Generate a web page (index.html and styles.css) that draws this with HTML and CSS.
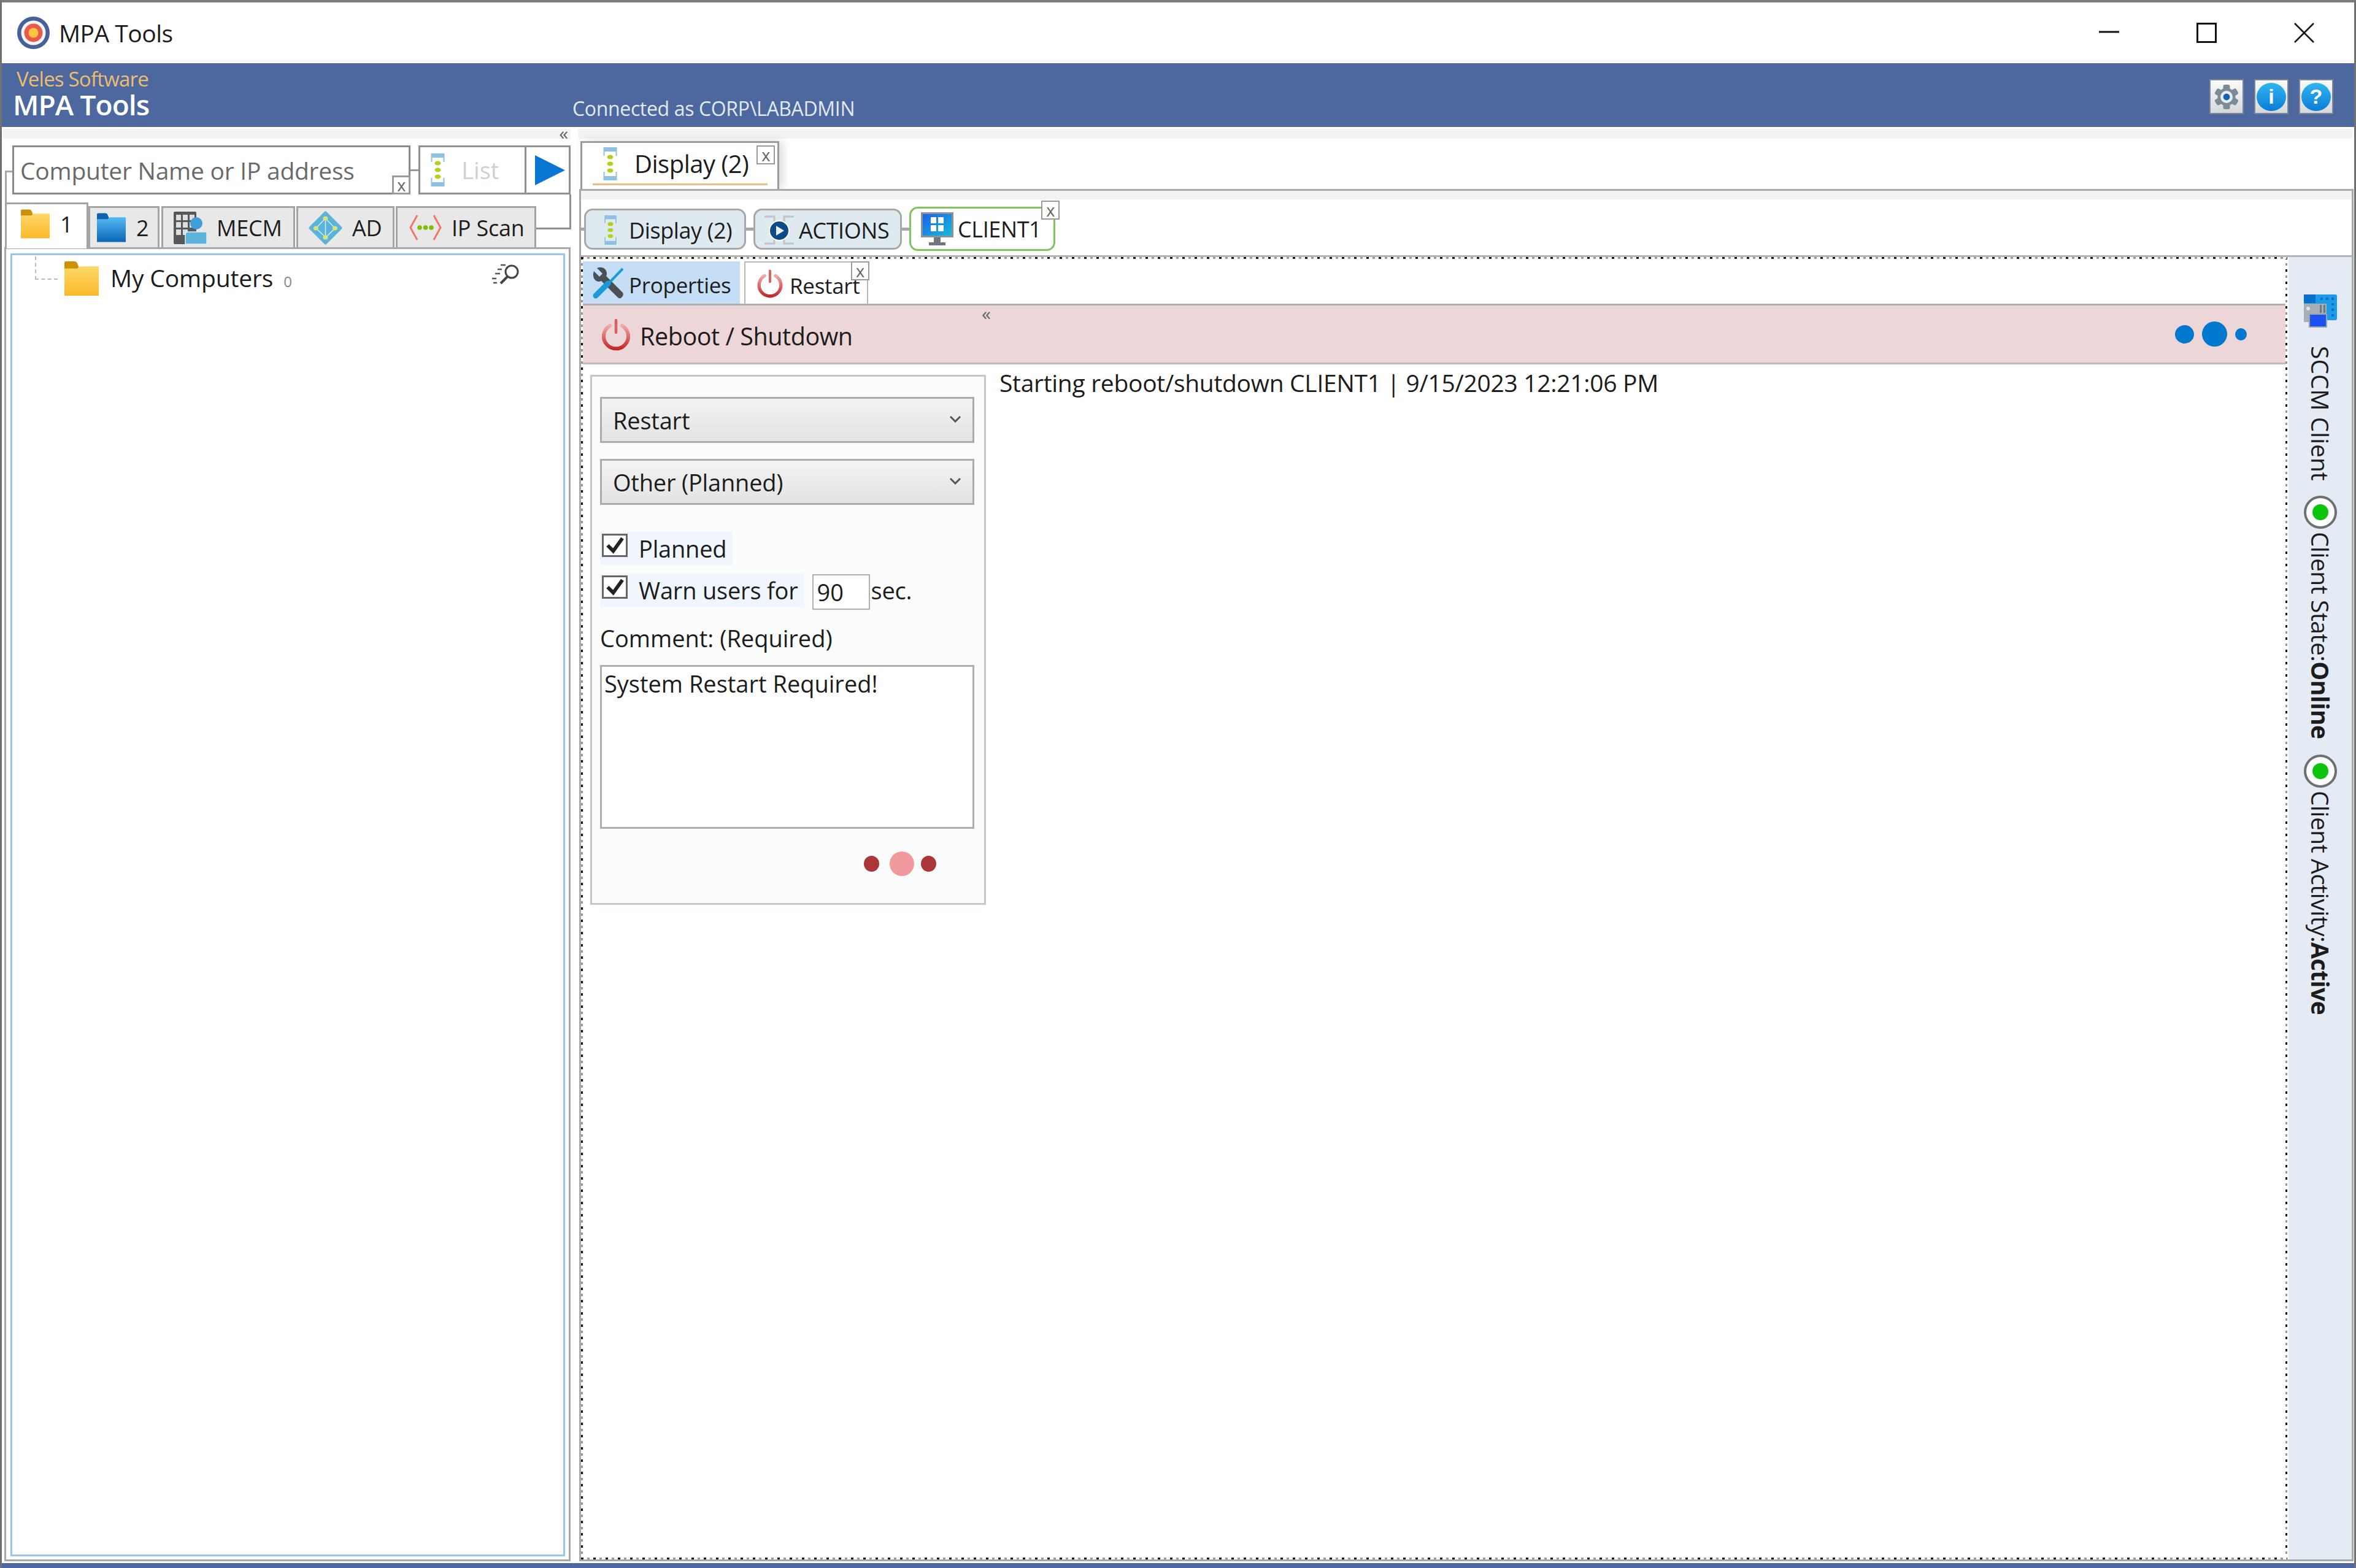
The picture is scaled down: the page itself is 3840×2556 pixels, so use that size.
FILE: index.html
```html
<!DOCTYPE html>
<html lang="en">
<head>
  <meta charset="UTF-8" />
  <title>MPA Tools</title>
  <link rel="stylesheet" href="styles.css">
</head>
<body>

  <!-- shared icons -->
  <svg class="icon-defs" width="0" height="0">
    <defs>
      <linearGradient id="gradYellow" x1="0" y1="0" x2="0" y2="1"><stop offset="0" stop-color="#fdd868"/><stop offset="1" stop-color="#fbb82a"/></linearGradient>
      <linearGradient id="gradBlue" x1="0" y1="0" x2="0" y2="1"><stop offset="0" stop-color="#55b8f2"/><stop offset="1" stop-color="#0a66b6"/></linearGradient>
      <linearGradient id="gradPower" x1="0" y1="0" x2="0" y2="1"><stop offset="0" stop-color="#f0a8a8"/><stop offset="1" stop-color="#c62828"/></linearGradient>
      <linearGradient id="gradScreen" x1="0" y1="0" x2="1" y2="1"><stop offset="0" stop-color="#1a60ea"/><stop offset="1" stop-color="#18bcdc"/></linearGradient>
    </defs>
    <symbol id="i-folder-yellow" viewBox="0 0 48 48">
      <path d="M0 2q0-2 2-2h12q3 0 4 3l2 5v6H0z" fill="#d08f08"/>
      <path d="M0 10h18l3-3h27v41H0z" fill="url(#gradYellow)"/>
    </symbol>
    <symbol id="i-folder-blue" viewBox="0 0 48 48">
      <path d="M0 2q0-2 2-2h12q3 0 4 3l2 5v6H0z" fill="#0f62b0"/>
      <path d="M0 10h18l3-3h27v41H0z" fill="url(#gradBlue)"/>
    </symbol>
    <symbol id="i-display" viewBox="0 0 22 54">
      <path d="M0 0h22v14h-2V7H2v7H0z" fill="#8fc1e2"/>
      <path d="M0 54h22V40h-2v7H2v-7H0z" fill="#8fc1e2"/>
      <ellipse cx="11" cy="16" rx="5" ry="3.500" fill="#b4cf1e"/>
      <ellipse cx="11" cy="27" rx="5" ry="3.500" fill="#b4cf1e"/>
      <ellipse cx="11" cy="38" rx="5" ry="3.500" fill="#b4cf1e"/>
    </symbol>
    <symbol id="i-power" viewBox="0 0 48 54">
      <path d="M14 13a20 20 0 1 0 20 0" fill="none" stroke="url(#gradPower)" stroke-width="6" stroke-linecap="round"/>
      <path d="M24 4v20" fill="none" stroke="#dc6060" stroke-width="4.500" stroke-linecap="round"/>
    </symbol>
    <symbol id="i-radio" viewBox="0 0 54 54">
      <circle cx="27" cy="27" r="25" fill="#fff" stroke="#6f6f6f" stroke-width="4"/>
      <circle cx="27" cy="27" r="13" fill="#0cc40c"/>
    </symbol>
    <symbol id="i-chevron" viewBox="0 0 20 12">
      <path d="M2 2l8 8 8-8" fill="none" stroke="#555" stroke-width="3"/>
    </symbol>
    <symbol id="i-check" viewBox="0 0 40 36">
      <path d="M6 18l11 11L35 4" fill="none" stroke="#222" stroke-width="7"/>
    </symbol>
  </svg>

  <div class="window">

    <header class="titlebar">
      <svg class="logo" viewBox="0 0 53 53">
        <circle cx="26.500" cy="26.500" r="26.500" fill="#47609a"/>
        <circle cx="26.500" cy="26.500" r="20" fill="#f4f5f8"/>
        <circle cx="26.500" cy="26.500" r="15" fill="#ea5a4c"/>
        <circle cx="26.500" cy="26.500" r="8" fill="#fbc53c"/>
      </svg>
      <span class="app-title">MPA Tools</span>
      <div class="win-controls">
        <svg viewBox="0 0 33 33"><path d="M0 15h33" stroke="#111" stroke-width="3"/></svg>
        <svg viewBox="0 0 33 33"><rect x="1.500" y="1.500" width="30" height="30" fill="none" stroke="#111" stroke-width="3"/></svg>
        <svg viewBox="0 0 33 33"><path d="M1 1l31 31M32 1L1 32" stroke="#111" stroke-width="2.500"/></svg>
      </div>
    </header>

    <div class="banner">
      <div class="brand">
        <div class="brand-sub">Veles Software</div>
        <div class="brand-name">MPA Tools</div>
      </div>
      <div class="connected">Connected as CORP\LABADMIN</div>
      <div class="tool-buttons">
        <button class="tool-btn" aria-label="Settings">
          <svg class="gear" viewBox="0 0 44 44">
            <g fill="#7c8b98">
              <rect x="16" y="0" width="12" height="44" rx="3"/>
              <rect x="16" y="0" width="12" height="44" rx="3" transform="rotate(60 22 22)"/>
              <rect x="16" y="0" width="12" height="44" rx="3" transform="rotate(120 22 22)"/>
              <circle cx="22" cy="22" r="16"/>
            </g>
            <circle cx="22" cy="22" r="11" fill="#e9edf0"/>
            <circle cx="22" cy="22" r="6" fill="#1464b4"/>
          </svg>
        </button>
        <button class="tool-btn"><span class="round-icon">i</span></button>
        <button class="tool-btn"><span class="round-icon">?</span></button>
      </div>
    </div>

    <div class="content">

      <aside class="left-pane">
        <div class="pane-band"><span class="collapse">«</span></div>

        <div class="search-row">
          <div class="search-box">
            <input class="search-input" placeholder="Computer Name or IP address">
            <span class="close-box close-box-search">x</span>
          </div>
          <div class="link-line"></div>
          <div class="list-btn">
            <svg class="icon-display"><use href="#i-display"/></svg>
            <span>List</span>
          </div>
          <div class="go-btn">
            <svg viewBox="0 0 49 49" class="go-arrow"><path d="M0 0l49 24.500L0 49z" fill="#0a78d2"/></svg>
          </div>
        </div>

        <div class="tabs-row">
          <div class="tab tab-active tab-1"><svg class="tab-folder"><use href="#i-folder-yellow"/></svg><span>1</span></div>
          <div class="tab tab-2"><svg class="tab-folder"><use href="#i-folder-blue"/></svg><span>2</span></div>
          <div class="tab tab-mecm">
            <svg class="tab-icon" viewBox="0 0 54 53">
              <rect x="0" y="0" width="37" height="53" rx="2" fill="#56595c"/>
              <g fill="#dcdee0">
                <rect x="4" y="5" width="8" height="9"/><rect x="15" y="5" width="8" height="9"/><rect x="26" y="5" width="8" height="9"/>
                <rect x="4" y="17" width="8" height="9"/><rect x="15" y="17" width="8" height="9"/><rect x="26" y="17" width="8" height="9"/>
                <rect x="4" y="29" width="8" height="9"/><rect x="15" y="29" width="8" height="9"/>
              </g>
              <circle cx="37" cy="19" r="10" fill="#3f9fd6"/>
              <path d="M19 53V38q0-5 5-5h30v20z" fill="#5cb4dc" stroke="#e8e8e8" stroke-width="1.500"/>
            </svg>
            <span>MECM</span>
          </div>
          <div class="tab tab-ad">
            <svg class="tab-icon tab-icon-ad" viewBox="0 0 55 55">
              <path d="M27.500 3l24.500 24.500-24.500 24.500L3 27.500z" fill="#5bb3dc" stroke="#5bb3dc" stroke-width="5" stroke-linejoin="round"/>
              <path d="M27.500 12L12 28l16 15 15-15zM27.500 12v31" fill="none" stroke="#d4edf8" stroke-width="1.500"/>
              <ellipse cx="27.500" cy="12" rx="4" ry="3.500" fill="#dbe46e"/><ellipse cx="12" cy="28" rx="4" ry="3.500" fill="#dbe46e"/><ellipse cx="43" cy="28" rx="4" ry="3.500" fill="#dbe46e"/><ellipse cx="27.500" cy="43" rx="4" ry="3.500" fill="#dbe46e"/>
            </svg>
            <span>AD</span>
          </div>
          <div class="tab tab-scan">
            <svg class="tab-icon-scan" viewBox="0 0 55 42">
              <path d="M14 1L3 21l11 20M41 1l11 20-11 20" fill="none" stroke="#f2756c" stroke-width="3"/>
              <circle cx="18" cy="21" r="3.800" fill="#84bd00"/><circle cx="27.500" cy="21" r="3.800" fill="#84bd00"/><circle cx="37" cy="21" r="3.800" fill="#84bd00"/>
            </svg>
            <span>IP Scan</span>
          </div>
        </div>

        <div class="tree-frame">
          <div class="tree">
            <div class="tree-row">
              <svg class="tree-folder"><use href="#i-folder-yellow"/></svg>
              <span class="tree-label">My Computers</span>
              <span class="tree-count">0</span>
              <svg class="tree-search" viewBox="0 0 49 34">
                <circle cx="32" cy="13" r="10" fill="none" stroke="#444" stroke-width="3"/>
                <path d="M25 21L14 32" stroke="#444" stroke-width="4"/>
                <path d="M14 2h8M9 9h7M5 16h8M0 24h7M2 31h6" stroke="#555" stroke-width="2.500"/>
              </svg>
            </div>
          </div>
        </div>
      </aside>

      <main class="main-pane">
        <div class="pane-band"></div>

        <div class="top-tabs">
          <div class="top-tab">
            <svg class="icon-display"><use href="#i-display"/></svg>
            <span>Display (2)</span>
            <span class="close-box close-box-top">x</span>
          </div>
        </div>

        <div class="panel">
          <div class="panel-band"></div>

          <div class="pills">
            <div class="pill-link"></div>
            <div class="pill pill-display">
              <svg class="icon-display-sm"><use href="#i-display"/></svg>
              <span>Display (2)</span>
            </div>
            <div class="pill-link"></div>
            <div class="pill pill-actions">
              <svg class="icon-actions" viewBox="0 0 48 48">
                <path d="M0 2h16v12M48 2H32v12M0 46h16V34M48 46H32V34" fill="none" stroke="#c2c5c8" stroke-width="3"/>
                <circle cx="24" cy="25" r="16" fill="#0d4a86" stroke="#fff" stroke-width="2"/>
                <path d="M19 17l13 8-13 8z" fill="#e8eff5"/>
              </svg>
              <span>ACTIONS</span>
            </div>
            <div class="pill-link"></div>
            <div class="pill pill-client">
              <svg class="icon-monitor" viewBox="0 0 53 54">
                <rect x="1.500" y="1.500" width="50" height="38" fill="url(#gradScreen)" stroke="#8a9299" stroke-width="3"/>
                <g fill="#fff"><rect x="16" y="8" width="9" height="10"/><rect x="28" y="8" width="9" height="10"/><rect x="16" y="21" width="9" height="10"/><rect x="28" y="21" width="9" height="10"/></g>
                <rect x="21" y="41" width="11" height="8" fill="#6f777d"/>
                <rect x="13" y="49" width="27" height="5" fill="#6f777d"/>
              </svg>
              <span>CLIENT1</span>
              <span class="close-box close-box-client">x</span>
            </div>
          </div>

          <div class="workspace">
            <div class="doc">
              <div class="doc-tabs">
                <div class="doc-tab doc-tab-props">
                  <svg class="icon-tools" viewBox="0 0 53 53">
                    <path d="M3 8l9 9 5-5-9-9c7-3 15 0 16 8 0 2 0 3-1 5l27 27q2 3-1 7t-7 1L15 24c-2 1-4 1-5 1C3 24 0 15 3 8z" fill="#4b5056"/>
                    <path d="M50 4L24 31" stroke="#1c9ad8" stroke-width="4"/>
                    <path d="M26 28L6 48" stroke="#1c9ad8" stroke-width="9" stroke-linecap="round"/>
                  </svg>
                  <span>Properties</span>
                </div>
                <div class="doc-tab doc-tab-restart">
                  <svg class="icon-power-sm"><use href="#i-power"/></svg>
                  <span>Restart</span>
                  <span class="close-box close-box-restart">x</span>
                </div>
              </div>

              <div class="reboot-band">
                <svg class="icon-power"><use href="#i-power"/></svg>
                <span class="reboot-title">Reboot / Shutdown</span>
                <span class="collapse collapse-band">«</span>
                <div class="dots dots-blue"><i class="dot dot-m"></i><i class="dot dot-l"></i><i class="dot dot-s"></i></div>
              </div>

              <div class="doc-body">
                <form class="reboot-form">
                  <div class="select"><span>Restart</span><svg class="chevron"><use href="#i-chevron"/></svg></div>
                  <div class="select"><span>Other (Planned)</span><svg class="chevron"><use href="#i-chevron"/></svg></div>

                  <div class="check-row check-first">
                    <label class="check"><span class="check-box"><svg class="check-mark"><use href="#i-check"/></svg></span>Planned</label>
                  </div>
                  <div class="check-row">
                    <label class="check"><span class="check-box"><svg class="check-mark"><use href="#i-check"/></svg></span>Warn users for</label>
                    <input class="seconds" value="90">
                    <span class="seconds-unit">sec.</span>
                  </div>

                  <div class="comment-label">Comment: (Required)</div>
                  <textarea class="comment">System Restart Required!</textarea>

                  <div class="dots dots-red"><i class="dot dot-edge"></i><i class="dot dot-mid"></i><i class="dot dot-edge"></i></div>
                </form>

                <div class="log-line">Starting reboot/shutdown CLIENT1 | 9/15/2023 12:21:06 PM</div>
              </div>
            </div>

            <div class="side">
              <svg class="icon-sccm" viewBox="0 0 54 54">
                <rect x="0" y="0" width="54" height="42" rx="3" fill="#1b9be8"/>
                <rect x="0" y="0" width="19" height="14" fill="#0a6fcb"/>
                <g fill="#0a6fcb">
                  <rect x="3" y="5" width="4" height="4"/><rect x="11" y="5" width="4" height="4"/>
                  <rect x="27" y="5" width="4" height="4"/><rect x="36" y="5" width="4" height="4"/><rect x="45" y="5" width="4" height="4"/>
                  <rect x="45" y="14" width="4" height="4"/><rect x="45" y="23" width="4" height="4"/><rect x="45" y="32" width="4" height="4"/>
                </g>
                <rect x="0" y="15" width="37" height="30" fill="#a8afb4"/>
                <circle cx="7" cy="23" r="3" fill="#e4e7e9"/>
                <rect x="26" y="17" width="3" height="13" fill="#6f787e"/><rect x="32" y="17" width="3" height="13" fill="#6f787e"/>
                <rect x="9" y="32" width="28" height="21" fill="#1b52f2" stroke="#9aa3a9" stroke-width="2"/>
              </svg>
              <span class="side-label side-sccm">SCCM Client</span>
              <svg class="side-radio radio-state"><use href="#i-radio"/></svg>
              <span class="side-label side-near">Client State:<b>Online</b></span>
              <svg class="side-radio radio-activity"><use href="#i-radio"/></svg>
              <span class="side-label side-near">Client Activity:<b>Active</b></span>
            </div>
          </div>
        </div>
      </main>
    </div>

    <div class="statusbar"></div>
  </div>

</body>
</html>
```

FILE: styles.css
```css
* {
  box-sizing: border-box;
}

html, body {
  margin: 0;
  padding: 0;
  background: #fff;
}

body {
  width: 3840px;
  height: 2556px;
  overflow: hidden;
  font-family: "Open Sans", "Noto Sans", sans-serif;
  font-size: 38px;
  color: #1c1c1c;
}

.icon-defs {
  position: absolute;
}

.window {
  display: flex;
  flex-direction: column;
  height: 2556px;
  border-top: 4px solid #7c7c7c;
  border-left: 3px solid #707070;
  border-right: 3px solid #707070;
}

/* title bar */
.titlebar {
  display: flex;
  align-items: center;
  height: 99px;
  padding-left: 25px;
  flex: none;
}

.logo {
  width: 53px;
  height: 53px;
}

.app-title {
  margin-left: 15px;
  font-size: 39px;
  letter-spacing: -0.5px;
}

.win-controls {
  display: flex;
  gap: 126px;
  margin-left: auto;
  margin-right: 65px;
}

.win-controls svg {
  width: 33px;
  height: 33px;
}

/* blue banner */
.banner {
  display: flex;
  height: 104px;
  flex: none;
  background: #4d689f;
  padding-left: 18px;
}

.brand {
  width: 912px;
  padding-top: 7px;
}

.brand-sub {
  padding-left: 6px;
  font-size: 33px;
  line-height: 37px;
  letter-spacing: -0.8px;
  color: #eebd6f;
}

.brand-name {
  font-size: 46px;
  line-height: 46px;
  font-weight: 600;
  letter-spacing: -0.9px;
  color: #fff;
}

.connected {
  align-self: flex-end;
  padding-bottom: 9px;
  font-size: 32px;
  letter-spacing: -0.35px;
  color: #e3e9f3;
}

.tool-buttons {
  display: flex;
  gap: 17px;
  margin-left: auto;
  margin-right: 34px;
  margin-top: 26px;
}

.tool-btn {
  display: flex;
  align-items: center;
  justify-content: center;
  width: 56px;
  height: 57px;
  padding: 0;
  background: linear-gradient(#fafafa, #d6d9dc);
  border: 2px solid #7f8794;
}

.gear {
  width: 44px;
  height: 40px;
}

.round-icon {
  display: flex;
  align-items: center;
  justify-content: center;
  width: 48px;
  height: 46px;
  border-radius: 50%;
  background: linear-gradient(#2fb6f0, #0c7cd6);
  color: #fff;
  font-size: 34px;
  font-weight: 700;
}

/* main area */
.content {
  display: flex;
  flex: 1;
  min-height: 0;
}

.pane-band {
  display: flex;
  justify-content: flex-end;
  height: 16px;
  margin-top: 3px;
  margin-left: 2px;
  flex: none;
  background: #f3f3f3;
}

.collapse {
  font-size: 30px;
  line-height: 13px;
  color: #666;
  padding-right: 4px;
}

/* left pane */
.left-pane {
  position: relative;
  display: flex;
  flex-direction: column;
  width: 927px;
  flex: none;
}

.search-row {
  position: relative;
  display: flex;
  align-items: center;
  height: 80px;
  margin-top: 11px;
  padding-left: 17px;
}

.search-row::before {
  content: "";
  position: absolute;
  left: 5px;
  top: 41px;
  width: 12px;
  height: 60px;
  border-left: 3px solid #a8a8a8;
  border-top: 3px solid #a8a8a8;
}

.search-row::after {
  content: "";
  position: absolute;
  left: 871px;
  top: 80px;
  width: 54px;
  height: 54px;
  border-right: 3px solid #8f8f8f;
  border-bottom: 3px solid #8f8f8f;
}

.search-box {
  position: relative;
  width: 650px;
  height: 80px;
}

.search-input {
  width: 100%;
  height: 100%;
  padding: 0 0 0 10px;
  border: 3px solid #8a8a8a;
  outline: none;
  font-family: inherit;
  font-size: 39px;
  letter-spacing: -0.25px;
  color: #666;
}

.search-input::placeholder {
  color: #6a6a6a;
  opacity: 1;
}

.close-box {
  position: absolute;
  display: flex;
  align-items: center;
  justify-content: center;
  width: 30px;
  height: 31px;
  background: #fff;
  border: 2px solid #9a9a9a;
  font-size: 27px;
  line-height: 1;
  color: #666;
}

.close-box-search {
  right: 0;
  bottom: 0;
  border-width: 3px;
}

.link-line {
  width: 13px;
  height: 3px;
  background: #999;
}

.list-btn {
  display: flex;
  align-items: center;
  width: 173px;
  height: 80px;
  padding-left: 17px;
  border: 3px solid #8f8f95;
  border-right: none;
  font-size: 38px;
  color: #ccd0d4;
}

.icon-display {
  width: 23px;
  height: 54px;
}

.list-btn span {
  margin-left: 27px;
}

.go-btn {
  display: flex;
  align-items: center;
  width: 75px;
  height: 80px;
  padding-left: 14px;
  border: 3px solid #8f8f95;
}

.go-arrow {
  width: 49px;
  height: 49px;
}

.tabs-row {
  position: relative;
  z-index: 1;
  display: flex;
  align-items: flex-end;
  height: 75px;
  margin-top: 13px;
  padding-left: 5px;
}

.tab {
  display: flex;
  align-items: center;
  height: 67px;
  margin-bottom: 2px;
  background: #e8e8e8;
  border: 3px solid #a4a4a4;
  border-bottom: none;
  font-size: 36px;
  letter-spacing: -0.2px;
}

.tab-active {
  height: 75px;
  margin-bottom: 0;
  background: #fff;
  padding-bottom: 8px;
}

.tab-1 {
  width: 136px;
  padding-left: 23px;
}

.tab-2 {
  width: 116px;
  padding-left: 11px;
}

.tab-mecm {
  width: 218px;
  margin-left: 3px;
  padding-left: 17px;
}

.tab-ad {
  width: 160px;
  margin-left: 2px;
  padding-left: 17px;
}

.tab-scan {
  width: 229px;
  margin-left: 2px;
  padding-left: 18px;
}

.tab-folder {
  width: 47px;
  height: 48px;
}

.tab span {
  margin-left: 17px;
}

.tab-mecm span,
.tab-ad span {
  margin-left: 16px;
}

.tab-scan span {
  margin-left: 15px;
}

.tab-icon {
  width: 54px;
  height: 53px;
}

.tab-icon-ad {
  width: 55px;
  height: 55px;
}

.tab-icon-scan {
  width: 55px;
  height: 42px;
}

.tree-frame {
  flex: 1;
  width: 923px;
  margin: -2px 0 3px 4px;
  padding: 7px 6px 5px 7px;
  border: 3px solid #a8a8a8;
  background: #fff;
}

.tree {
  height: 100%;
  border: 3px solid #9cc4ee;
}

.tree-row {
  position: relative;
  display: flex;
  align-items: center;
  height: 58px;
  margin-top: 9px;
  padding-left: 84px;
}

.tree-row::before {
  content: "";
  position: absolute;
  left: 37px;
  top: -7px;
  width: 35px;
  height: 36px;
  border-left: 2px dashed #b4bcc6;
  border-bottom: 2px dashed #b4bcc6;
}

.tree-folder {
  width: 58px;
  height: 56px;
}

.tree-label {
  margin-left: 18px;
  margin-top: -4px;
  font-size: 39px;
  letter-spacing: -0.15px;
}

.tree-count {
  margin-left: 17px;
  margin-top: 8px;
  font-size: 24px;
  color: #888;
}

.tree-search {
  width: 49px;
  height: 34px;
  margin-left: auto;
  margin-right: 67px;
  margin-top: -14px;
}

/* right pane */
.main-pane {
  display: flex;
  flex-direction: column;
  flex: 1;
  min-width: 0;
  margin-left: 12px;
  margin-right: 1px;
}

.main-pane .pane-band {
  margin-left: 0;
  margin-right: 2px;
}

.top-tabs {
  display: flex;
  height: 78px;
  margin-top: 4px;
  padding-left: 4px;
  flex: none;
}

.top-tab {
  position: relative;
  display: flex;
  align-items: center;
  width: 324px;
  padding: 0 0 8px 34px;
  background: #fff;
  border: 3px solid #9c9c9c;
  border-bottom: none;
  box-shadow: 6px 0 14px rgba(0, 0, 0, 0.14);
  font-size: 40px;
  letter-spacing: -0.5px;
}

.top-tab::after {
  content: "";
  position: absolute;
  left: 17px;
  right: 16px;
  bottom: 6px;
  height: 3px;
  background: #e9bd85;
}

.top-tab span:not(.close-box) {
  margin-left: 28px;
}

.close-box-top {
  top: 4px;
  right: 4px;
}

.panel {
  position: relative;
  display: flex;
  flex-direction: column;
  flex: 1;
  min-height: 0;
  margin-left: 2px;
  margin-bottom: 3px;
  background: #fff;
  border: 3px solid #a8a8a8;
}

.panel-band {
  height: 14px;
  background: #f2f2f2;
  flex: none;
}

.pills {
  display: flex;
  align-items: center;
  height: 72px;
  margin-top: 12px;
  flex: none;
}

.pill-link {
  width: 12px;
  height: 5px;
  background: #a8a8a8;
}

.pill-link:first-child {
  width: 5px;
}

.pill {
  position: relative;
  display: flex;
  align-items: center;
  height: 67px;
  padding-top: 4px;
  background: #dfe9f0;
  border: 3px solid #a8a8a8;
  border-radius: 14px;
  font-size: 36px;
  letter-spacing: -0.4px;
}

.pill-display {
  width: 264px;
  padding-left: 29px;
}

.pill-actions {
  width: 242px;
  padding-left: 15px;
}

.pill-client {
  width: 238px;
  height: 72px;
  padding-top: 0;
  padding-left: 16px;
  background: #fff;
  border-color: #80c45c;
}

.icon-display-sm {
  width: 22px;
  height: 48px;
}

.pill-display span {
  margin-left: 19px;
}

.icon-actions {
  width: 48px;
  height: 48px;
}

.pill-actions span {
  margin-left: 8px;
}

.icon-monitor {
  width: 53px;
  height: 54px;
}

.pill-client span:not(.close-box) {
  margin-left: 7px;
}

.close-box-client {
  top: -13px;
  right: -10px;
}

.workspace {
  display: flex;
  flex: 1;
  min-height: 0;
  margin-top: 7px;
  border-top: 3px solid #b4b4b4;
}

/* the dotted frame alternates black and grey dots, which a plain dotted border can't do */
.doc {
  display: flex;
  flex-direction: column;
  flex: 1;
  min-width: 0;
  margin-right: 2px;
  padding: 3px;
  background:
    repeating-linear-gradient(90deg, #111 0 4px, #fff 4px 10px, #999 10px 14px, #fff 14px 20px) left top / 100% 3px no-repeat,
    repeating-linear-gradient(90deg, #111 0 4px, #fff 4px 10px, #999 10px 14px, #fff 14px 20px) left bottom / 100% 3px no-repeat,
    repeating-linear-gradient(180deg, #111 0 4px, #fff 4px 10px, #999 10px 14px, #fff 14px 20px) left top / 3px 100% no-repeat,
    repeating-linear-gradient(180deg, #111 0 4px, #fff 4px 10px, #999 10px 14px, #fff 14px 20px) right top / 3px 100% no-repeat;
}

.doc-tabs {
  display: flex;
  height: 76px;
  padding-top: 4px;
  flex: none;
  border-bottom: 3px solid #b0b0b0;
}

.doc-tab {
  position: relative;
  display: flex;
  align-items: center;
  font-size: 35px;
  letter-spacing: -0.3px;
}

.doc-tab-props {
  width: 256px;
  padding-left: 15px;
  background: #c5def5;
}

.doc-tab-restart {
  width: 202px;
  margin-left: 7px;
  padding-left: 18px;
  background: #fff;
  border: 2px solid #b8b8b8;
  border-bottom: none;
}

.icon-tools {
  width: 53px;
  height: 53px;
}

.doc-tab-props span {
  margin-left: 7px;
  margin-top: 8px;
}

.icon-power-sm {
  width: 44px;
  height: 48px;
}

.doc-tab-restart span:not(.close-box) {
  margin-left: 10px;
  margin-top: 8px;
}

.close-box-restart {
  top: -2px;
  right: -4px;
}

.reboot-band {
  position: relative;
  display: flex;
  align-items: center;
  height: 96px;
  padding-left: 30px;
  flex: none;
  background: #ecd6d8;
  border-bottom: 3px solid #c4b8b9;
}

.icon-power {
  width: 48px;
  height: 54px;
}

.reboot-title {
  margin-left: 15px;
  margin-top: 6px;
  font-size: 39.5px;
  letter-spacing: -0.45px;
}

.collapse-band {
  position: absolute;
  left: 650px;
  top: 6px;
}

.dots {
  display: flex;
  align-items: center;
}

.dot {
  display: block;
  border-radius: 50%;
}

.dots-blue {
  gap: 13px;
  margin-left: auto;
  margin-right: 63px;
}

.dots-blue .dot {
  background: #0078d0;
}

.dot-m {
  width: 31px;
  height: 30px;
}

.dot-l {
  width: 41px;
  height: 41px;
}

.dot-s {
  width: 19px;
  height: 20px;
}

.doc-body {
  display: flex;
  flex: 1;
  align-items: flex-start;
  padding: 17px 0 0 12px;
}

.reboot-form {
  display: flex;
  flex-direction: column;
  width: 645px;
  height: 864px;
  padding: 33px 16px 0 13px;
  background: #fbfdfd;
  border: 3px solid #c4c8c8;
}

.select {
  display: flex;
  align-items: center;
  justify-content: space-between;
  height: 75px;
  margin-bottom: 26px;
  padding: 0 18px 0 18px;
  background: linear-gradient(#f3f3f3, #e3e3e3);
  border: 3px solid #ababab;
  font-size: 38px;
  letter-spacing: -0.2px;
}

.chevron {
  width: 20px;
  height: 12px;
  margin-top: -4px;
}

.check-row {
  display: flex;
  align-items: flex-start;
  height: 54px;
  margin-bottom: 14px;
}

.check-first {
  margin-top: 18px;
}

.check {
  display: flex;
  align-items: center;
  height: 54px;
  padding: 0 10px 0 3px;
  background: #eff6fd;
  font-size: 38px;
  letter-spacing: -0.2px;
}

.check-box {
  display: flex;
  align-items: center;
  justify-content: center;
  width: 42px;
  height: 38px;
  margin-right: 18px;
  margin-top: -10px;
  background: #fff;
  border: 3px solid #666;
}

.check-mark {
  width: 34px;
  height: 30px;
}

.seconds {
  width: 94px;
  height: 58px;
  margin: 1px 0 0 13px;
  padding: 0 0 0 6px;
  border: 2px solid #b0b0b0;
  outline: none;
  font-family: inherit;
  font-size: 38px;
  color: #1c1c1c;
}

.seconds-unit {
  margin-top: 1px;
  margin-left: 2px;
  letter-spacing: -0.2px;
}

.comment-label {
  margin-top: 12px;
  margin-bottom: 2px;
  font-size: 38px;
  line-height: 50px;
}

.comment {
  width: 100%;
  height: 267px;
  margin: 17px 0 0;
  padding: 2px 4px;
  border: 3px solid #abaeb5;
  outline: none;
  resize: none;
  overflow: hidden;
  font-family: inherit;
  font-size: 38px;
  line-height: 50px;
  color: #1c1c1c;
}

.dots-red {
  margin-top: 37px;
  padding-left: 430px;
}

.dot-edge {
  width: 25px;
  height: 26px;
  background: #ab3538;
}

.dot-mid {
  width: 40px;
  height: 40px;
  margin: 0 11px 0 17px;
  background: #f09a9d;
}

.log-line {
  margin: -12px 0 0 22px;
  font-size: 39px;
  line-height: 50px;
  letter-spacing: -0.3px;
}

/* vertical side panel */
.side {
  display: flex;
  flex-direction: column;
  align-items: center;
  width: 103px;
  padding-top: 61px;
  flex: none;
  background: #e4ebf4;
}

.icon-sccm {
  width: 54px;
  height: 54px;
  flex: none;
}

.side-label {
  writing-mode: vertical-rl;
  font-size: 39px;
  line-height: 42px;
}

.side-label b {
  font-weight: 700;
}

.side-sccm {
  margin-top: 30px;
}

.side-near {
  margin-top: 5px;
  letter-spacing: -0.45px;
}

.side-radio {
  width: 54px;
  height: 54px;
  flex: none;
}

.radio-state {
  margin-top: 24px;
}

.radio-activity {
  margin-top: 26px;
}

.statusbar {
  height: 8px;
  flex: none;
  background: #4d689f;
}
```
